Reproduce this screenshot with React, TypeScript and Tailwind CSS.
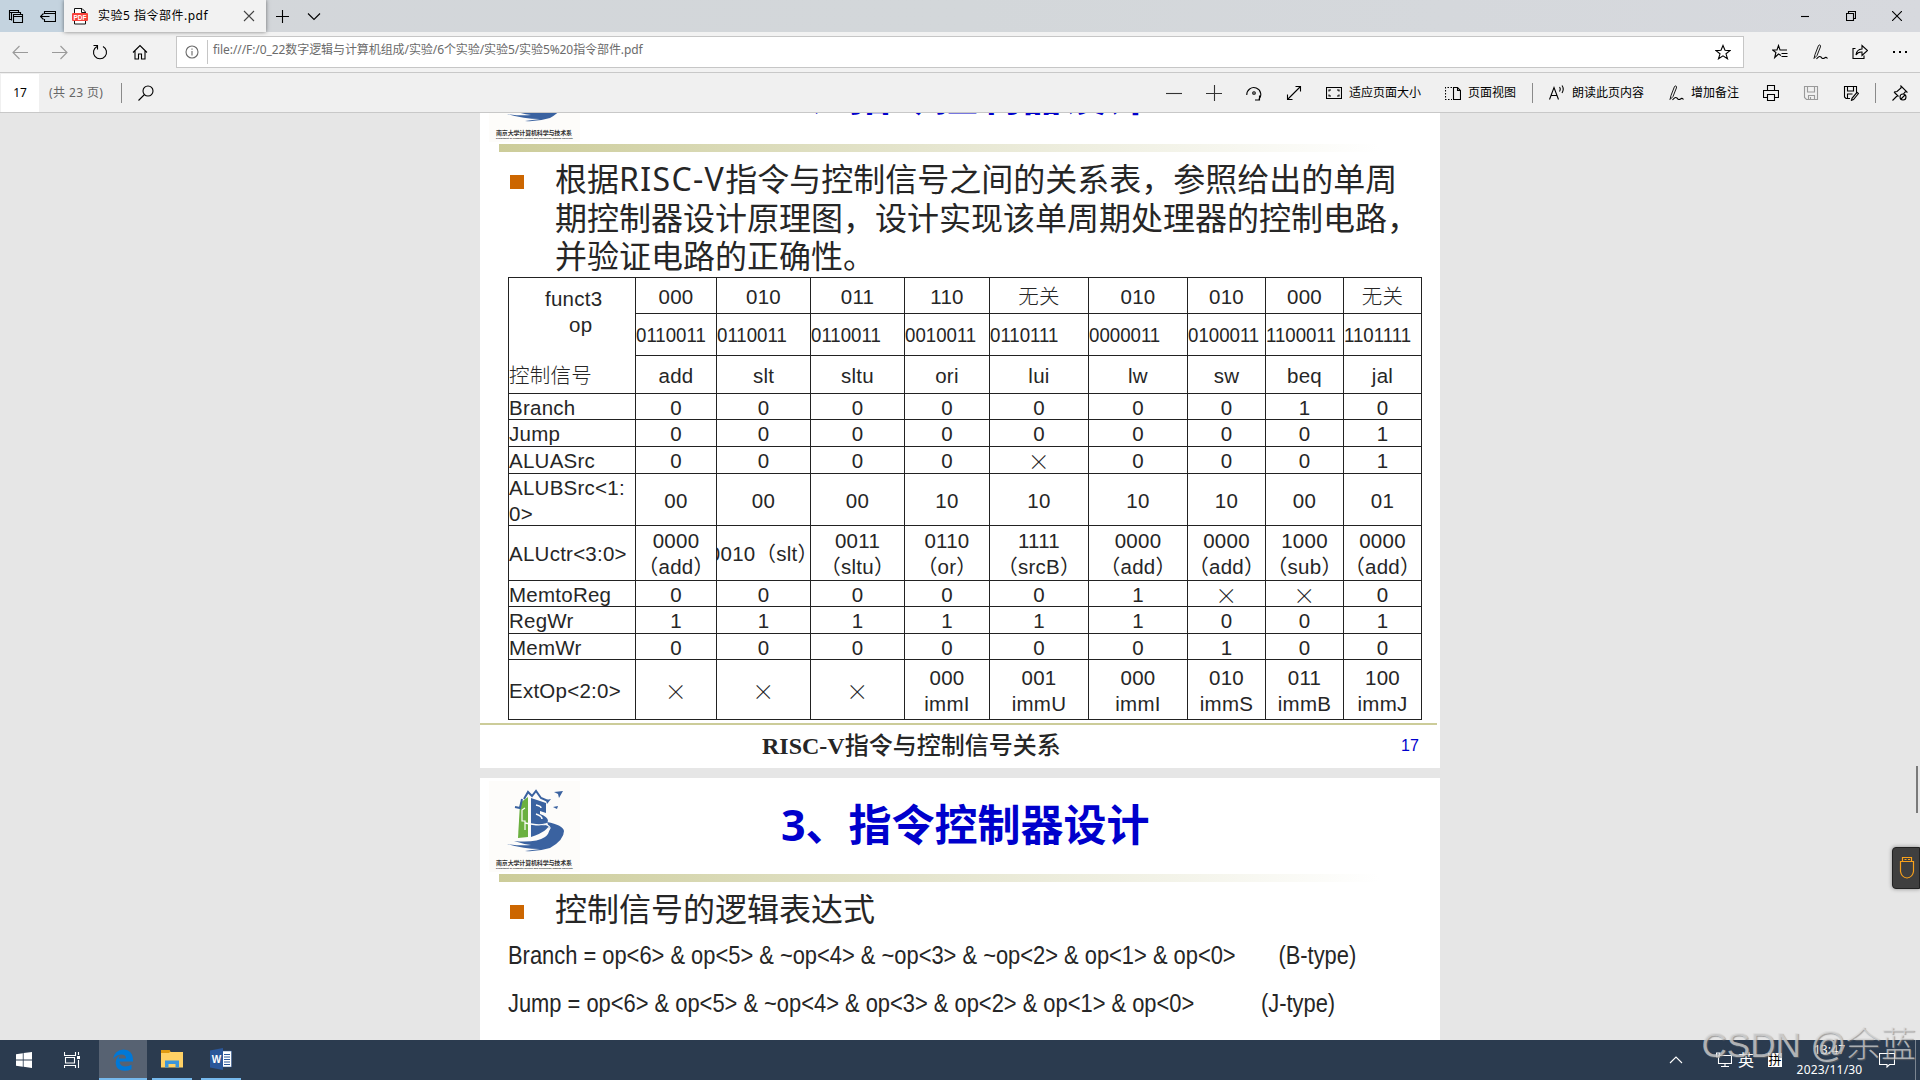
import type { ReactNode } from "react"

const columns = [127, 81, 94, 94, 85, 99, 99, 78, 78, 78]

const rows = [
    { name: "Branch", h: "h-[26px]", cells: ["0", "0", "0", "0", "0", "0", "0", "1", "0"] },
    { name: "Jump", h: "h-[27px]", cells: ["0", "0", "0", "0", "0", "0", "0", "0", "1"] },
    { name: "ALUASrc", h: "h-[27px]", cells: ["0", "0", "0", "0", "×", "0", "0", "0", "1"] },
    { name: "ALUBSrc<1:\n0>", h: "h-[52px]", cells: ["00", "00", "00", "10", "10", "10", "10", "00", "01"] },
    {
        name: "ALUctr<3:0>",
        h: "h-[55px]",
        cells: [
            "0000\n（add）", "0010（slt）", "0011\n（sltu）", "0110\n（or）", "1111\n（srcB）",
            "0000\n（add）", "0000\n（add）", "1000\n（sub）", "0000\n（add）",
        ],
    },
    { name: "MemtoReg", h: "h-[26px]", cells: ["0", "0", "0", "0", "0", "1", "×", "×", "0"] },
    { name: "RegWr", h: "h-[27px]", cells: ["1", "1", "1", "1", "1", "1", "0", "0", "1"] },
    { name: "MemWr", h: "h-[26px]", cells: ["0", "0", "0", "0", "0", "0", "1", "0", "0"] },
    {
        name: "ExtOp<2:0>",
        h: "h-[60px]",
        cells: ["×", "×", "×", "000\nimmI", "001\nimmU", "000\nimmI", "010\nimmS", "011\nimmB", "100\nimmJ"],
    },
]

const funct3 = ["000", "010", "011", "110", "无关", "010", "010", "000", "无关"]
const opcodes = ["0110011", "0110011", "0110011", "0010011", "0110111", "0000011", "0100011", "1100011", "1101111"]
const names = ["add", "slt", "sltu", "ori", "lui", "lw", "sw", "beq", "jal"]

const Icon = ({ children, size = 16, className = "" }: { children: ReactNode; size?: number; className?: string }) => (
    <svg
        width={size}
        height={size}
        viewBox={`0 0 ${size} ${size}`}
        fill="none"
        stroke="currentColor"
        strokeWidth="1.1"
        className={`shrink-0 ${className}`}
    >
        {children}
    </svg>
)

const Slot = ({ w, children }: { w: string; children: ReactNode }) => (
    <div className={`flex shrink-0 items-center justify-center ${w}`}>{children}</div>
)

const Pen = () => (
    <Icon>
        <path d="M2 14.500 L3 10.500 L6.500 1.500 Q7.300 .5 8.200 1.200 Q8.800 2 8.400 3 L5 11.500 z" strokeWidth=".9" />
        <path d="M4.500 15 Q7 11.500 9 13 Q10.500 15.500 12.500 14 Q14 12.500 15.500 14.500" />
    </Icon>
)

const TabBar = () => (
    <div className="flex h-8 bg-gradient-to-r from-[#d3d6da] via-[#d3d7da] to-[#d7d9de]">
        <div className="flex w-16 bg-[#c4d3df]">
            <Slot w="w-8">
                <Icon>
                    <path d="M5.500 6.500h9v8h-9z M5.500 8.500h9 M3.500 12.500v-8h9v2 M3.500 11.500h-2v-9h9v2 M1.500 4.500h2" />
                </Icon>
            </Slot>
            <Slot w="w-8">
                <Icon>
                    <path d="M4.500 6v-2.500h11v10h-11v-2.500 M4.500 5.500h11 M.5 8.500h9 M3.500 5.500l-3 3 3 3" />
                </Icon>
            </Slot>
        </div>
        <div className="flex w-[202px] items-center bg-[#f2f2f2] shadow-[0_0_4px_rgba(0,0,0,0.5)]">
            <svg width="18" height="18" viewBox="0 0 18 18" className="ml-[7px] shrink-0">
                <path d="M3.500 17v-15.500h7.500l3.500 3.500v12z" fill="#fff" stroke="#111" />
                <path d="M10.500 1.500v4h4" fill="none" stroke="#111" />
                <rect x="1" y="6" width="16" height="8" rx="1" fill="#f9423a" />
                <text x="9" y="12.500" textAnchor="middle" className="fill-white font-['Liberation_Sans'] text-[6.500px] font-bold">
                    PDF
                </text>
            </svg>
            <span className="ml-[9px] w-[145px] text-[12px] tracking-[0.500px] whitespace-nowrap">实验5 指令部件.pdf</span>
            <Icon size={12} className="text-[#444]">
                <path d="M1 1l10 10M11 1l-10 10" />
            </Icon>
        </div>
        <Slot w="w-8">
            <Icon><path d="M8.500 2v13M2 8.500h13" /></Icon>
        </Slot>
        <Slot w="w-8">
            <Icon><path d="M2 5.500l6 6 6-6" /></Icon>
        </Slot>
        <div className="ml-auto flex">
            <Slot w="w-[46px]">
                <Icon size={10}><path d="M1 5.500h8" /></Icon>
            </Slot>
            <Slot w="w-[46px]">
                <Icon size={10}><path d="M.5 2.500h7v7h-7z M2.500 2.500v-2h7v7h-2" /></Icon>
            </Slot>
            <Slot w="w-[46px]">
                <Icon size={10}><path d="M0 0l10 10M10 0l-10 10" /></Icon>
            </Slot>
        </div>
    </div>
)

const AddressBar = () => (
    <div className="flex h-[41px] items-center border-b border-[#c8c8c8] bg-[#f2f2f2]">
        <Slot w="w-10"><Icon className="text-[#9a9a9a]"><path d="M16 8.500h-15M7.500 2l-6.500 6.500 6.500 6.500" /></Icon></Slot>
        <Slot w="w-10"><Icon className="text-[#9a9a9a]"><path d="M0 8.500h15M8.500 2l6.500 6.500-6.500 6.500" /></Icon></Slot>
        <Slot w="w-10"><Icon><path d="M11 2.500A6.500 6.500 0 1 1 5 2.500M1.500 1.500h4v4" /></Icon></Slot>
        <Slot w="w-10"><Icon><path d="M1 8.500l7-7 7 7M3 7v8h3.500v-5h3v5h3.500v-8" /></Icon></Slot>
        <div className="ml-4 flex h-8 w-[1568px] items-center border border-[#c6c6c6] bg-white text-[#6b6b6b]">
            <Slot w="w-[30px]">
                <Icon size={14}><circle cx="7" cy="7" r="6" /><path d="M7 6v4.500M7 3.500v1.200" /></Icon>
            </Slot>
            <div className="h-6 w-px bg-[#c6c6c6]" />
            <span className="ml-[5px] pb-[5px] text-[12px] tracking-[-0.080px] whitespace-nowrap">
                file:///F:/0_22数字逻辑与计算机组成/实验/6个实验/实验5/实验5%20指令部件.pdf
            </span>
            <Icon className="mr-3 ml-auto text-black">
                <path d="M8 1.500l2 4.800 5 .3-4 3.200 1.500 5-4.500-2.900-4.500 2.900 1.500-5-4-3.200 5-.3z" />
            </Icon>
        </div>
        <div className="ml-auto flex">
            <Slot w="w-10">
                <Icon>
                    <path d="M9 11.500l-2.500-1.500-3.800 3.500 1.200-5-3.400-2.500h4.500l1.500-4.500 1.500 4.500h7M9.500 9.500h6M9.500 12.500h6" />
                </Icon>
            </Slot>
            <Slot w="w-10"><Pen /></Slot>
            <Slot w="w-10">
                <Icon>
                    <path d="M3.500 4.500h-2.500v10h11v-3M4 11q.5-5.500 6-6v-3.500l5.500 5-5.500 5v-3.500q-4-.3-6 3z" />
                </Icon>
            </Slot>
            <Slot w="w-10">
                <Icon><path d="M1 8h2M7 8h2M13 8h2" strokeWidth="2" /></Icon>
            </Slot>
        </div>
    </div>
)

const Toolbar = () => (
    <div className="flex h-10 items-center border-b border-[#c8c8c8] bg-[#f0f0f0] text-[12px] whitespace-nowrap">
        <div className="ml-px flex h-[38px] w-[38px] items-center justify-center bg-white">17</div>
        <span className="ml-[10px] w-[72px] tracking-[0.400px] text-[#666]">(共 23 页)</span>
        <div className="h-5 w-px bg-[#8a8a8a]" />
        <Icon className="ml-[16px]"><circle cx="10" cy="6" r="5" /><path d="M6.500 9.500l-6 6" /></Icon>
        <div className="ml-auto flex items-center">
            <Slot w="w-10"><Icon className="text-[#333]"><path d="M0 8.500h16" /></Icon></Slot>
            <Slot w="w-10"><Icon className="text-[#333]"><path d="M0 8.500h16M8.500 0v16" /></Icon></Slot>
            <Slot w="w-10">
                <Icon>
                    <path d="M.8 10a7 7 0 1 1 12 4.500M13.500 10.500v4.500h-4.500" />
                    <circle cx="8" cy="8" r="1.300" />
                </Icon>
            </Slot>
            <Slot w="w-10"><Icon><path d="M1.500 14.500l13-13M9.500 1.500h5v5M1.500 9.500v5h5" /></Icon></Slot>
            <div className="ml-3 flex items-center">
                <Icon>
                    <path d="M.5 2.500h15v11h-15zM3 6.500v-1.500h2M11 5h2v1.500M3 9.500v1.500h2M11 11h2v-1.500" />
                </Icon>
                <span className="ml-[7px] w-[96px]">适应页面大小</span>
                <Icon>
                    <path d="M8.500 2.500h4l3 3v9h-7zM12.500 2.500v3h3" />
                    <path d="M7 2.500h-6.500v12h6.500" strokeDasharray="1.500 1.500" />
                </Icon>
                <span className="ml-[7px] w-[64px]">页面视图</span>
            </div>
            <div className="h-5 w-px bg-[#8a8a8a]" />
            <Icon className="ml-4">
                <path d="M.5 14.500l4.500-12 4.500 12M2 10.500h6M10.500 2q1.500 2 0 4.500M13 .5q2.500 3.500 0 7.500" />
            </Icon>
            <span className="mr-6 ml-[7px]">朗读此页内容</span>
            <Pen />
            <span className="ml-[7px] w-[72px]">增加备注</span>
            <Icon className="mr-6">
                <path d="M4.500 5.500v-5h7v5M4.500 12.500h-4v-7h15v7h-4M4.500 9.500h7v6h-7z" />
            </Icon>
            <Icon className="mr-6 text-[#9a9a9a]">
                <path d="M1.500 1.500h13v13h-11l-2-2zM4.500 1.500v5.500h7v-5.500M5.500 14.500v-4h6v4M7.500 12v2" />
            </Icon>
            <Icon>
                <path d="M7 13.500h-4l-1.500-1.500v-10.500h12v6M4.500 1.500v4.500h6v-4.500M4.500 13v-4h5M15.500 8.500l-5 6-2 .8.500-2 5-6z" />
            </Icon>
            <div className="mx-4 h-5 w-px bg-[#8a8a8a]" />
            <Icon className="mr-3">
                <path d="M.5 15.500l5-5M2 7l3-.5 4-3.500v-2l6 6h-2l-1.500 2M2 7l4.500 4.500" />
                <circle cx="11" cy="12" r="3" />
                <path d="M9 14l4-4" />
            </Icon>
        </div>
    </div>
)

const Logo = () => (
    <svg width="91" height="91" viewBox="0 0 91 91" className="shrink-0 bg-[#fdfcfa]">
        <path d="M31 22l8-6v40l-10 1z" fill="#6bb03f" />
        <path d="M42 17l15 5v10l-6-2v3q8 3 8 7-1 3-7 4 6 1 8-1 0 7-18 13z" fill="#3a62a0" />
        <path d="M58 41q16 3 17 9 0 9-14 17-13 4-25 3l15-2q-17 0-33-5 15 2 24 1-8-1-17-4 22 2 31-4 7-5 2-15z" fill="#3a62a0" />
        <path d="M36 42q14 3 20 1 5 2 5 4-2 6-12 9" stroke="#fdfcfa" strokeWidth="1.300" fill="none" />
        <path d="M36 27l-3 2v11h3v9" stroke="#fdfcfa" strokeWidth="1.200" fill="none" />
        <path d="M47 24q5 1 5 3M47 33q6 2 6 5" stroke="#fdfcfa" strokeWidth="1.500" fill="none" />
        <path d="M26 26l5 1 2-9M35 18l4-7 4 4 4-5 5 7 7 3" stroke="#3a62a0" strokeWidth="2" fill="none" />
        <path d="M65 11l9-1-4 7-1-4zM57 19l5-1-4 5zM64 26l5-1-1 3z" fill="#3a62a0" />
        <text x="7" y="83.500" textLength="76" className="fill-[#333] font-['Noto_Sans_CJK_SC'] text-[6px] font-bold">
            南京大学计算机科学与技术系
        </text>
        <text x="7" y="87.500" textLength="77" className="fill-[#333] font-['Liberation_Sans'] text-[2.500px] font-bold">
            Department of Computer Science and Technology, Nanjing University
        </text>
    </svg>
)

const Slide = ({ children }: { children: ReactNode }) => (
    <section className="flex h-[720px] w-[960px] shrink-0 flex-col bg-white text-[#262626]">
        <div className="flex h-24 pt-[3px] pl-[9px]">
            <Logo />
            <h1 className="mt-[13px] ml-[201px] font-['Open_Sans','Noto_Sans_CJK_SC',sans-serif] text-[43px] leading-[62px] font-bold whitespace-nowrap text-[#0000cc]">
                3、指令控制器设计
            </h1>
        </div>
        <div className="ml-[19px] h-2 w-[880px] shrink-0 bg-gradient-to-r from-[#cccc99] via-[#e6e6d0] to-white" />
        {children}
    </section>
)

const Bullet = ({ children }: { children: ReactNode }) => (
    <div className="ml-[30px] flex">
        <div className="mt-[14px] size-[14px] shrink-0 bg-[#cc6600]" />
        <p className="-mt-px ml-[31px] font-['Noto_Sans','Noto_Sans_CJK_SC',sans-serif] text-[32px] leading-[38.500px] whitespace-nowrap">
            {children}
        </p>
    </div>
)

const SignalTable = () => (
    <table className="ml-7 w-[913px] table-fixed border-collapse text-center text-[20.500px] leading-[26px] tracking-[0.250px] whitespace-pre [&_td]:border [&_td]:border-[#222] [&_td]:p-0">
        <colgroup>
            {columns.map((w, i) => <col key={i} style={{ width: w }} />)}
        </colgroup>
        <tbody>
            <tr className="h-9">
                <td rowSpan={3} className="text-left align-top">
                    <div className="flex h-[114px] flex-col pt-[8px]">
                        <span className="pl-[36px]">funct3</span>
                        <span className="pl-[60px]">op</span>
                        <span className="mt-auto mb-[3px] font-light">控制信号</span>
                    </div>
                </td>
                {funct3.map((t, i) => <td key={i} className="pt-[2px]! font-light">{t}</td>)}
            </tr>
            <tr className="h-[42px]">
                {opcodes.map((t, i) => (
                    <td key={i} className="text-left tracking-normal">
                        <span className="inline-block origin-left scale-x-[0.910]">{t}</span>
                    </td>
                ))}
            </tr>
            <tr className="h-[38px]">
                {names.map((t) => <td key={t} className="pt-[2px]!">{t}</td>)}
            </tr>
            {rows.map((r) => (
                <tr key={r.name} className={r.h}>
                    <td className="pt-[2px]! text-left"><div className="-my-2">{r.name}</div></td>
                    {r.cells.map((t, i) => (
                        <td key={i} className={t === "×" ? "" : "pt-[2px]!"}>
                            {t === "×" ? (
                                <div className="-my-2 font-['Noto_Sans_CJK_SC'] text-[22px] font-light">{t}</div>
                            ) : (
                                <div className="-my-2 flex justify-center overflow-hidden">{t}</div>
                            )}
                        </td>
                    ))}
                </tr>
            ))}
        </tbody>
    </table>
)

const Formula = ({ expr, type, gap }: { expr: string; type: string; gap: string }) => (
    <div className="ml-7 flex h-12 origin-left scale-x-[0.855] items-center text-[25.600px] whitespace-nowrap">
        <span>{expr}</span>
        <span className={gap}>{type}</span>
    </div>
)

const Viewer = () => (
    <main className="relative flex h-[927px] flex-col items-center gap-[10px] overflow-hidden bg-[#e6e6e6] font-['Liberation_Sans','Noto_Sans_CJK_SC',sans-serif]">
        <div className="-mt-[65px] shrink-0">
            <Slide>
                <div className="mt-[9px] h-[116px]">
                    <Bullet>
                        根据<span className="tracking-[1.350px]">RISC-V</span>指令与控制信号之间的关系表，参照给出的单周
                        <br />
                        期控制器设计原理图，设计实现该单周期处理器的控制电路，
                        <br />
                        并验证电路的正确性。
                    </Bullet>
                </div>
                <SignalTable />
                <div className="mt-[3px] h-[2px] w-[957px] shrink-0 bg-[#cccc99]" />
                <div className="flex items-center pt-[3px] pl-[282px]">
                    <span className="w-[639px] font-['Liberation_Serif','Noto_Sans_CJK_SC',serif] text-[24px] font-bold whitespace-nowrap">
                        RISC-V<span className="font-medium">指令与控制信号关系</span>
                    </span>
                    <span className="text-[16px] text-[#0000cc]">17</span>
                </div>
            </Slide>
        </div>
        <Slide>
            <div className="mt-[9px]">
                <Bullet>控制信号的逻辑表达式</Bullet>
            </div>
            <div className="pt-[3px]">
                <Formula
                    expr="Branch = op<6> & op<5> & ~op<4> & ~op<3> & ~op<2> & op<1> & op<0>"
                    type="(B-type)"
                    gap="ml-[50px]"
                />
                <Formula
                    expr="Jump = op<6> & op<5> & ~op<4> & op<3> & op<2> & op<1> & op<0>"
                    type="(J-type)"
                    gap="ml-[78px]"
                />
            </div>
        </Slide>
        <div className="absolute top-[653px] right-[2px] h-[47px] w-[2px] bg-[#7a7a7a]" />
        <div className="absolute top-[734px] right-0 flex h-[42px] w-7 items-center justify-center rounded-l-sm border border-[#222] bg-[#3f3f3f] pl-[2px] text-[#f9a11b] shadow-[0_0_4px_rgba(0,0,0,0.4)]">
            <svg width="16" height="24" viewBox="0 0 16 24" fill="none" stroke="currentColor" strokeWidth="1.200">
                <path d="M3.500 5.500v-4h9v4M1.500 5.500h13v10q-1 6-6.500 6.500-5.500-.5-6.500-6.500zM5.500 3.500h2M9 3.500h2" />
            </svg>
        </div>
    </main>
)

const Taskbar = () => (
    <footer className="relative flex h-10 bg-[#2b3b4f] text-white">
        <Slot w="w-12">
            <svg width="16" height="16" viewBox="0 0 16 16" fill="white">
                <path d="M0 2.200l6.800-1v6.300h-6.800zM7.600 1.100l8.400-1.100v7.500h-8.400zM0 8.400h6.800v6.300l-6.800-1zM7.600 8.400h8.400v7.600l-8.400-1.200z" />
            </svg>
        </Slot>
        <div className="mr-[3px]">
            <div className="flex h-full w-12 items-center justify-center">
                <Icon>
                    <path d="M.5 0v3.500h11v-3.500M1.500 5.500h9v5.500h-9zM.5 16v-2.500h11v2.500M14.500 0v3M14.500 8v8" />
                    <path d="M13 4h3v3h-3z" fill="currentColor" stroke="none" />
                </Icon>
            </div>
        </div>
        <div className="flex w-12 items-center justify-center border-b-2 border-[#76b9ed] bg-[#576272]">
            <svg width="22" height="22" viewBox="0 0 22 22" className="mt-[2px]">
                <path
                    d="M1 10q1.500-9 10.500-9.500 9 .5 9.500 9.500v2.500h-13.500q.5 5 6 5 3 0 6-1.800v4.500q-3 1.500-7 1.500-8 0-8.800-7.500 0-5 4.200-7.700-1 1.500-1.200 3h7.300q0-4-4.300-4-5.500 0-8.700 4.500z"
                    fill="#0078d7"
                />
            </svg>
        </div>
        <div className="mx-[5px] flex w-10 items-center justify-center border-b-2 border-[#76b9ed]">
            <svg width="22" height="18" viewBox="0 0 22 18">
                <path d="M0 0h8l1.500 2h12.500v15.500h-22z" fill="#ffd165" />
                <path d="M0 0h8.500l1 1.500-1.500 1.500h-8z" fill="#e09b12" />
                <path d="M4 17.500v-7h14v7h-3.500v-3.500h-7v3.500z" fill="#3b96dc" />
            </svg>
        </div>
        <div className="ml-1 flex w-10 items-center justify-center border-b-2 border-[#76b9ed]">
            <svg width="22" height="22" viewBox="0 0 22 22">
                <path d="M12 3h9.500v16h-9.500z" fill="#fff" stroke="#2b579a" strokeWidth=".5" />
                <path d="M14 6.500h6M14 9h6M14 11.500h6M14 14h6M14 16.500h6" stroke="#2b579a" />
                <path d="M0 2.500l13-2.500v22l-13-2.500z" fill="#2b579a" />
                <text x="6.500" y="15" textAnchor="middle" className="fill-white font-['Liberation_Sans'] text-[10px] font-bold">W</text>
            </svg>
        </div>
        <div className="ml-auto flex items-center">
            <Icon className="mr-[32px]"><path d="M2 11l6-6 6 6" /></Icon>
            <Icon><path d="M2.500 3.500h13v8h-13zM9 11.500v3M5 14.500h8M.5 1v4h3v-4z" /></Icon>
            <span className="ml-[6px] text-[16px]">英</span>
            <span className="ml-[14px] flex size-[14px] items-center justify-center bg-white text-[13px] text-black">拼</span>
            <div className="ml-[14px] flex w-[67px] flex-col items-center text-[12px] leading-5 tracking-[0.200px]">
                <span>13:47</span>
                <span>2023/11/30</span>
            </div>
            <Icon className="mr-[20px] ml-[16px]"><path d="M.5 1.500h15v11h-5l-2.500 2.500v-2.500h-7.500z" /></Icon>
            <div className="mr-1 h-full w-px bg-[#7b8591]" />
        </div>
        <div className="absolute -top-[19px] right-[4px] font-['Liberation_Sans','Noto_Sans_CJK_SC',sans-serif] text-[35px] leading-[48px] font-light whitespace-nowrap text-[#dcdcdc]/70 [text-shadow:1px_1px_1px_rgba(110,110,110,0.6)]">
            CSDN @余蓝
        </div>
    </footer>
)

const App = () => {
    return (
        <div className="h-[1080px] w-[1920px] overflow-hidden font-['Noto_Sans','Noto_Sans_CJK_SC',sans-serif] text-black">
            <TabBar />
            <AddressBar />
            <Toolbar />
            <Viewer />
            <Taskbar />
        </div>
    )
}

export default App
